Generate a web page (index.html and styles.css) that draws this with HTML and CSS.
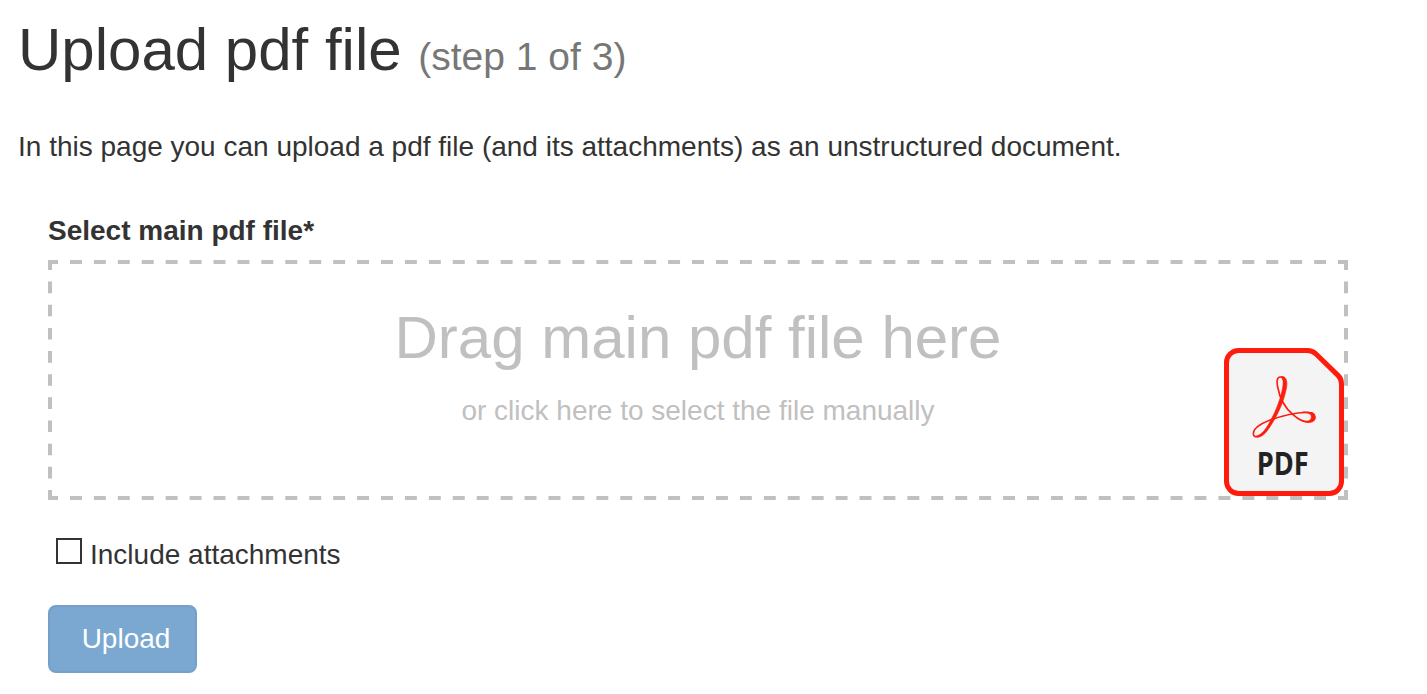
FILE: index.html
```html
<!DOCTYPE html>
<html lang="en">
<head>
<meta charset="utf-8">
<title>Upload pdf file</title>
<link rel="stylesheet" href="styles.css">
</head>
<body>
<main class="page">
  <h1 class="title">Upload pdf file <small class="step">(step 1 of 3)</small></h1>
  <p class="intro">In this page you can upload a pdf file (and its attachments) as an unstructured document.</p>
  <form class="form">
    <div class="label">Select main pdf file*</div>
    <div class="dropzone">
      <svg class="outline" viewBox="0 0 1300 240" aria-hidden="true">
        <path class="corners" d="M2 10V2H10M1290 2H1298V10M1298 230V238H1290M10 238H2V230"/>
        <path class="dash-h" d="M10 2H1290M10 238H1290"/>
        <path class="dash-v" d="M2 10V230M1298 10V230"/>
      </svg>
      <div class="drop-title">Drag main pdf file here</div>
      <div class="drop-hint">or click here to select the file manually</div>
      <svg class="pdf-icon" viewBox="42 24 360 444" aria-hidden="true">
        <path class="sheet" d="M86 31.500H292Q307 31.500 318 42L384 106Q394.500 116 394.500 132V424C394.500 444 378 460.500 358 460.500H86C66 460.500 49.500 444 49.500 424V68C49.500 48 66 31.500 86 31.500Z"/>
        <path class="ribbon" d="M211 111C200 111 200 126 203 141C209 174 225 204 249 224C268 241 286 248 300 245C319 241 319 218 298 218C262 215 217 227 179 241C145 254 130 270 130 282C131 295 149 292 162 277C183 254 202 220 214 180C222 153 230 111 211 111Z"/>
        <path class="swell" d="M213 109C232 108 233 130 228 150C218 196 197 237 171 273C158 290 144 295 136 289C155 287 171 263 181 243C198 212 209 184 216 153C221 131 221 115 213 109ZM278 216C302 214 317 222 316 235C314 247 297 250 276 243C294 246 304 241 304 231C304 221 295 218 278 216Z"/>
        <text class="pdf-word" x="140" y="404" textLength="156" lengthAdjust="spacingAndGlyphs">PDF</text>
      </svg>
    </div>
    <label class="attachments"><input class="check" type="checkbox">Include attachments</label>
    <button class="upload" type="button">Upload</button>
  </form>
</main>
</body>
</html>
```
FILE: styles.css
```css
* { box-sizing: border-box; }
body {
  margin: 0;
  background: #fff;
  color: #333;
  font: 28px/40px "Liberation Sans", Arial, sans-serif;
}
.page { padding: 17px 79px 0 18px; }
.title { margin: 0; font-size: 60px; line-height: 66px; font-weight: 400; white-space: nowrap; }
.step { font-size: 39px; line-height: 1; color: #777; }
.intro { margin: 44px 0 0; white-space: nowrap; }
.form { display: flex; flex-direction: column; align-items: flex-start; padding: 44px 0 0 30px; }
.label { font-weight: 700; }
.dropzone {
  position: relative;
  width: 1300px;
  height: 240px;
  margin-top: 9px;
  padding-top: 45px;
  text-align: center;
  color: #c0c0c0;
}
.outline { position: absolute; inset: 0; width: 1300px; height: 240px; fill: none; stroke: #c0c0c0; stroke-width: 4; }
.dash-h { stroke-dasharray: 11.963; stroke-dashoffset: 11.963; }
.dash-v { stroke-dasharray: 11.579; stroke-dashoffset: 11.579; }
.drop-title { font-size: 60px; line-height: 66px; }
.drop-hint { margin-top: 20px; }
.pdf-icon { position: absolute; right: 4px; bottom: 4px; width: 120px; height: 148px; }
.sheet { fill: #f4f4f4; stroke: #ff1b0e; stroke-width: 15; }
.ribbon { fill: none; stroke: #ff1b0e; stroke-width: 5; }
.swell { fill: #ff1b0e; stroke: #ff1b0e; stroke-width: 2; }
.pdf-word { fill: #222; font: 700 95px "Open Sans", "Noto Sans", sans-serif; }
.attachments { display: flex; align-items: center; margin-top: 35px; padding-left: 8px; gap: 8px; }
.check { appearance: none; width: 26px; height: 26px; margin: -8px 0 0; border: 2px solid #333; background: #fff; }
.upload {
  width: 149px;
  height: 68px;
  margin-top: 30px;
  padding: 0 0 0 7px;
  border: 2px solid #76a0c7;
  border-radius: 8px;
  background: #7aa8d0;
  color: #fff;
  font: inherit;
}
```
